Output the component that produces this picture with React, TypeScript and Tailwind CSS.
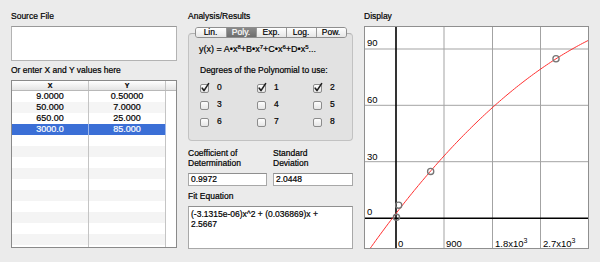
import React from "react";

const font = { fontFamily: '"Liberation Sans", Arial, sans-serif' };

function Check({ checked }: { checked: boolean }) {
  return (
    <svg width="10" height="10" viewBox="0 0 10 10" className="overflow-visible">
      <defs>
        <linearGradient id="cbg" x1="0" y1="0" x2="0" y2="1">
          <stop offset="0" stopColor="#ffffff" />
          <stop offset="1" stopColor="#e4e4e4" />
        </linearGradient>
      </defs>
      <rect x="0.5" y="1.5" width="8" height="8" rx="1.5" fill="url(#cbg)" stroke="#8c8c8c" strokeWidth="1" />
      {checked && (
        <path d="M2.2 5.2 L4 7.6 L8.6 0.6" fill="none" stroke="#1f1f1f" strokeWidth="1.6" strokeLinecap="round" strokeLinejoin="round" />
      )}
    </svg>
  );
}

function Chart() {
  const X = (x: number) => 32 + (x * 48) / 900;
  const Y = (y: number) => 192.3 - (y * 56.3) / 30;
  const f = (x: number) => -3.1315e-6 * x * x + 0.036869 * x + 2.5667;
  const pts: string[] = [];
  for (let x = -700; x <= 3700; x += 40) {
    pts.push(`${X(x).toFixed(2)},${Y(f(x)).toFixed(2)}`);
  }
  const data = [
    [9, 0.5],
    [50, 7],
    [650, 25],
    [3000, 85],
  ];
  const vlines = [80, 128.5, 176.5];
  const hlines = [23, 79.3, 135.7];
  return (
    <svg width="225" height="223" viewBox="0 0 225 223" className="block bg-white">
      {vlines.map((x) => (
        <line key={x} x1={x} y1="0" x2={x} y2="223" stroke="#a3a3a3" strokeWidth="1" />
      ))}
      {hlines.map((y) => (
        <line key={y} x1="0" y1={y} x2="225" y2={y} stroke="#a3a3a3" strokeWidth="1" />
      ))}
      <line x1="32" y1="0" x2="32" y2="223" stroke="#000" strokeWidth="1.6" />
      <line x1="0" y1="192.3" x2="225" y2="192.3" stroke="#000" strokeWidth="1.6" />
      <polyline points={pts.join(" ")} fill="none" stroke="#ff3030" strokeWidth="1" />
      {data.map(([x, y]) => (
        <circle key={x} cx={X(x)} cy={Y(y)} r="3.1" fill="none" stroke="#757575" strokeWidth="1.3" />
      ))}
      <g fontFamily='"Liberation Sans", Arial, sans-serif' fontSize="9.5" fill="#000">
        <text x="3" y="20">90</text>
        <text x="3" y="76.5">60</text>
        <text x="3" y="133.5">30</text>
        <text x="3" y="189">0</text>
        <text x="34" y="220.5">0</text>
        <text x="82" y="220.5">900</text>
        <text x="131" y="220.5">
          1.8x10<tspan dy="-4" fontSize="7">3</tspan>
        </text>
        <text x="179" y="220.5">
          2.7x10<tspan dy="-4" fontSize="7">3</tspan>
        </text>
      </g>
      <rect x="0.5" y="0.5" width="224" height="222" fill="none" stroke="#8f8f8f" strokeWidth="1" />
    </svg>
  );
}

export default function App() {
  const rows: [string, string][] = [
    ["9.0000", "0.50000"],
    ["50.000", "7.0000"],
    ["650.00", "25.000"],
    ["3000.0", "85.000"],
  ];
  const empty = Array.from({ length: 11 });
  const tabs = ["Lin.", "Poly.", "Exp.", "Log.", "Pow."];
  const checks = [
    ["0", true],
    ["1", true],
    ["2", true],
    ["3", false],
    ["4", false],
    ["5", false],
    ["6", false],
    ["7", false],
    ["8", false],
  ] as [string, boolean][];

  return (
    <div
      className="w-[600px] h-[262px] bg-[#ebebeb] flex gap-[11px] pl-[11px] pt-[11px] text-[8.5px] text-black overflow-hidden [-webkit-text-stroke-width:0.2px]"
      style={font}
    >
      {/* Left column */}
      <div className="w-[166px] flex flex-col">
        <div className="h-[11px] leading-[11px]">Source File</div>
        <div className="mt-[4px] h-[35px] bg-white border border-[#b3b3b3] border-t-[#999]"></div>
        <div className="mt-[4px] h-[11px] leading-[11px]">Or enter X and Y values here</div>
        <div className="mt-[4px] h-[168px] bg-white border border-[#8a8a8a] overflow-hidden flex flex-col">
          <div className="h-[10px] flex bg-gradient-to-b from-white to-[#e4e4e4] border-b border-[#b8b8b8] text-[7px] font-bold leading-[9px]">
            <div className="w-[77px] text-center border-r border-[#c4c4c4]">X</div>
            <div className="w-[77px] text-center border-r border-[#c4c4c4]">Y</div>
            <div className="flex-1"></div>
          </div>
          {rows.map(([x, y], i) => {
            const sel = i === 3;
            return (
              <div
                key={x}
                className={
                  "h-[11px] shrink-0 flex text-[9px] leading-[11px] " +
                  (sel ? "bg-[#3b6fd6] text-white" : i % 2 === 1 ? "bg-[#f5f5f5]" : "bg-white")
                }
              >
                <div className={"w-[77px] text-center border-r " + (sel ? "border-[#ffffff80]" : "border-[#c4c4c4]")}>{x}</div>
                <div className={"w-[77px] text-center border-r " + (sel ? "border-[#ffffff80]" : "border-[#c4c4c4]")}>{y}</div>
                <div className="flex-1 bg-white"></div>
              </div>
            );
          })}
          {empty.map((_, j) => (
            <div key={j} className={"h-[11px] shrink-0 flex " + ((j + 4) % 2 === 1 ? "bg-[#f4f4f4]" : "bg-white")}>
              <div className="w-[77px] border-r border-[#c4c4c4]"></div>
              <div className="w-[77px] border-r border-[#c4c4c4]"></div>
              <div className="flex-1 bg-white"></div>
            </div>
          ))}
        </div>
      </div>

      {/* Middle column */}
      <div className="w-[165px] flex flex-col">
        <div className="h-[11px] leading-[11px]">Analysis/Results</div>
        <div className="mt-[5px] flex justify-center relative z-10">
          <div className="flex h-[11px] border border-[#8e8e8e] rounded-[3px] overflow-hidden">
            {tabs.map((t, i) => (
              <div
                key={t}
                className={
                  "w-[30px] text-center leading-[9px] " +
                  (i > 0 ? "border-l border-[#9a9a9a] " : "") +
                  (i === 1
                    ? "bg-gradient-to-b from-[#8a8a8a] to-[#6e6e6e] text-white"
                    : "bg-gradient-to-b from-white to-[#e6e6e6]")
                }
              >
                {t}
              </div>
            ))}
          </div>
        </div>
        <div className="-mt-[5px] h-[108px] bg-[#e2e2e2] border border-[#c2c2c2] border-t-[#b0b0b0] rounded-[4px] pl-[10px] pt-[10px]">
          <div className="h-[11px] leading-[11px] text-[9px]">
            y(x) = A•x<sup className="text-[6px]">8</sup>+B•x<sup className="text-[6px]">7</sup>+C•x
            <sup className="text-[6px]">6</sup>+D•x<sup className="text-[6px]">5</sup>...
          </div>
          <div className="mt-[10px] h-[11px] leading-[11px] pl-[1px]">Degrees of the Polynomial to use:</div>
          <div className="mt-[6px] grid grid-cols-[57px_56px_40px] gap-y-[6px] pl-[1px]">
            {checks.map(([l, c]) => (
              <div key={l} className="flex items-center h-[11px]">
                <Check checked={c} />
                <span className="ml-[7px] leading-[11px]">{l}</span>
              </div>
            ))}
          </div>
        </div>
        <div className="mt-[7px] flex gap-[6px]">
          <div className="w-[79px] leading-[10px]">
            Coefficient of
            <br />
            Determination
          </div>
          <div className="w-[80px] leading-[10px]">
            Standard
            <br />
            Deviation
          </div>
        </div>
        <div className="mt-[5px] flex gap-[6px]">
          <div className="w-[79px] h-[13px] bg-white border border-[#a8a8a8] border-t-[#8f8f8f] pl-[2px] leading-[11px]">0.9972</div>
          <div className="w-[80px] h-[13px] bg-white border border-[#a8a8a8] border-t-[#8f8f8f] pl-[2px] leading-[11px]">2.0448</div>
        </div>
        <div className="mt-[5px] h-[10px] leading-[10px]">Fit Equation</div>
        <div className="mt-[5px] h-[43px] bg-white border border-[#a8a8a8] border-t-[#8f8f8f] pl-[2px] pt-[2px] leading-[10px]">
          (-3.1315e-06)x^2 + (0.036869)x +
          <br />
          2.5667
        </div>
      </div>

      {/* Right column */}
      <div className="w-[225px] flex flex-col">
        <div className="h-[11px] leading-[11px]">Display</div>
        <div className="mt-[4px]">
          <Chart />
        </div>
      </div>
    </div>
  );
}
